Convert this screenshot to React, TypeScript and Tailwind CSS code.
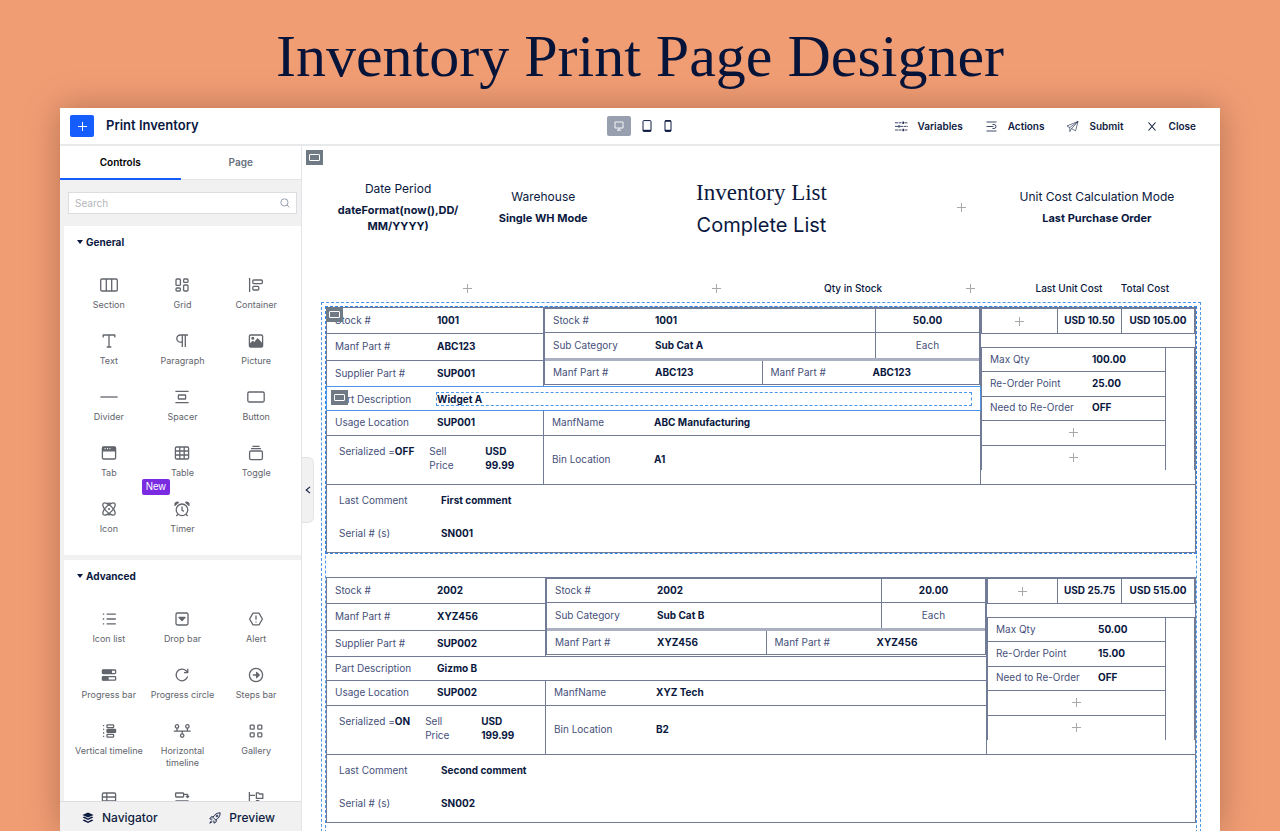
import type { ReactNode } from 'react';
import clsx from 'clsx';

interface StockRecord {
  stock: string;
  manfPart: string;
  supplierPart: string;
  description: string;
  usage: string;
  serialized: string;
  price: string;
  qty: string;
  subCategory: string;
  manfName: string;
  bin: string;
  unitCost: string;
  totalCost: string;
  maxQty: string;
  reorder: string;
  comment: string;
  serial: string;
  leftCol: string;
  rightCol: string;
}

const records: StockRecord[] = [
  {
    stock: '1001',
    manfPart: 'ABC123',
    supplierPart: 'SUP001',
    description: 'Widget A',
    usage: 'SUP001',
    serialized: 'OFF',
    price: '99.99',
    qty: '50.00',
    subCategory: 'Sub Cat A',
    manfName: 'ABC Manufacturing',
    bin: 'A1',
    unitCost: 'USD 10.50',
    totalCost: 'USD 105.00',
    maxQty: '100.00',
    reorder: '25.00',
    comment: 'First comment',
    serial: 'SN001',
    leftCol: 'w-[217px]',
    rightCol: 'w-[215px]',
  },
  {
    stock: '2002',
    manfPart: 'XYZ456',
    supplierPart: 'SUP002',
    description: 'Gizmo B',
    usage: 'SUP002',
    serialized: 'ON',
    price: '199.99',
    qty: '20.00',
    subCategory: 'Sub Cat B',
    manfName: 'XYZ Tech',
    bin: 'B2',
    unitCost: 'USD 25.75',
    totalCost: 'USD 515.00',
    maxQty: '50.00',
    reorder: '15.00',
    comment: 'Second comment',
    serial: 'SN002',
    leftCol: 'w-[219px]',
    rightCol: 'w-[209px]',
  },
];

// 18x18 outline icons of the controls palette
const icons: Record<string, ReactNode> = {
  section: <><rect x="0.7" y="3" width="16.6" height="12" rx="1.2" /><path d="M6.3 3v12M11.7 3v12" /></>,
  grid: (
    <>
      <rect x="3" y="3" width="4.4" height="6.4" rx="1" /><rect x="10.6" y="3" width="4.4" height="3.4" rx="1" />
      <rect x="3" y="12" width="4.4" height="3" rx="1" /><rect x="10.6" y="9" width="4.4" height="6" rx="1" />
    </>
  ),
  container: <><path d="M2.6 2v14" /><rect x="5.8" y="4" width="9.6" height="3.6" rx="1" /><rect x="5.8" y="10.4" width="6" height="3.6" rx="1" /></>,
  text: <path d="M3.2 5.5V3h11.6v2.5M9 3v12M6.7 15h4.6" />,
  paragraph: <path d="M15 3H7.4a3.6 3.6 0 0 0 0 7.2H9M9.3 3v12M12.3 3v12" />,
  picture: (
    <>
      <rect x="2.4" y="3" width="13.2" height="12" rx="1.2" />
      <path d="M3 14.4v-2.2l2.8-2.8 1.6 1.4L10.6 7l4.4 4.6v2.8z" fill="currentColor" />
      <circle cx="5.8" cy="6.2" r="0.9" fill="currentColor" />
    </>
  ),
  divider: <path d="M0.4 9h17.2" />,
  spacer: <><path d="M2.4 3.4h13.2M2.4 14.6h13.2" /><rect x="5.4" y="7" width="7.2" height="4" rx="0.6" /></>,
  button: <rect x="0.8" y="4" width="16.4" height="10" rx="1.4" />,
  tab: (
    <>
      <rect x="2.4" y="3" width="13.2" height="12" rx="1.2" />
      <path d="M3 3.4h12v3.4H3z" fill="currentColor" />
      <path d="M4.6 4.7h1M7 4.7h1M9.4 4.7h1" stroke="#fff" />
    </>
  ),
  table: <><rect x="2.4" y="3" width="13.2" height="12" rx="1.2" /><path d="M2.4 7h13.2M2.4 11h13.2M6.8 3v12M11.2 3v12" /></>,
  toggle: <><path d="M5.4 2.4h7.2M4 4.6h10" /><rect x="2.6" y="7" width="12.8" height="8.6" rx="1.4" /></>,
  atom: (
    <>
      <ellipse cx="9" cy="9" rx="8" ry="3.4" transform="rotate(45 9 9)" />
      <ellipse cx="9" cy="9" rx="8" ry="3.4" transform="rotate(-45 9 9)" />
      <circle cx="9" cy="9" r="1.1" fill="currentColor" stroke="none" />
      <path d="M6.6 3.8Q9 2.6 11.4 3.8M6.6 14.2Q9 15.4 11.4 14.2" />
    </>
  ),
  timer: (
    <>
      <circle cx="9" cy="9.8" r="5.8" /><path d="M9 6.4v3.8l1.8 1.2M5 14.2l-1.6 1.8M13 14.2l1.6 1.8" />
      <path d="M2 5.2a2.4 2.4 0 0 1 3.2-2.8zM16 5.2a2.4 2.4 0 0 0-3.2-2.8z" fill="currentColor" />
    </>
  ),
  iconList: <path d="M6.6 4.2h9.2M6.6 9h9.2M6.6 13.8h9.2M2.8 4.2h1.4M2.8 9h1.4M2.8 13.8h1.4" />,
  dropBar: <><rect x="3" y="3" width="12" height="12" rx="1.4" /><path d="M6 7.4h6l-3 3.2z" fill="currentColor" /></>,
  alert: <><path d="M6 3.2h6L15.4 9 12 14.8H6L2.6 9z" /><path d="M9 5.6v4.2M9 11.4v1.2" /></>,
  progressBar: (
    <>
      <rect x="2.4" y="4" width="13.2" height="3.6" rx="0.8" /><rect x="2.4" y="10.6" width="13.2" height="3.6" rx="0.8" />
      <path d="M3 4.4h8.4v2.8H3zM3 11h5v2.8H3z" fill="currentColor" />
    </>
  ),
  progressCircle: <path d="M14.6 10.4a5.8 5.8 0 1 1-1.6-5.6l1.6 1.6M14.8 2.8v3.8H11" />,
  stepsBar: <><circle cx="9" cy="9" r="6.6" /><path d="M5.8 9h6M9.6 6.4 12.2 9l-2.6 2.6z" fill="currentColor" /></>,
  vertical: (
    <>
      <path d="M3 3.6h1.2M3 7.4h1.2M3 11h1.2M3 14.4h1.2" />
      <rect x="7" y="2.8" width="6.6" height="2.8" rx="0.6" /><rect x="7" y="7.4" width="8.6" height="3" rx="0.6" fill="currentColor" />
      <rect x="7" y="12.4" width="6.6" height="2.8" rx="0.6" />
    </>
  ),
  horizontal: (
    <>
      <path d="M0.8 9.2h16.8M4 6v3M14.4 6v3M9.2 9.2v2.6" />
      <circle cx="4" cy="4.4" r="1.7" /><circle cx="14.4" cy="4.4" r="1.7" /><circle cx="9.2" cy="13.6" r="1.7" />
    </>
  ),
  gallery: (
    <>
      <rect x="3.2" y="3.2" width="4" height="4" rx="0.8" /><rect x="10.8" y="3.2" width="4" height="4" rx="0.8" />
      <rect x="3.2" y="10.8" width="4" height="4" rx="0.8" /><rect x="10.8" y="10.8" width="4" height="4" rx="0.8" />
    </>
  ),
  dataTable: <><rect x="2.4" y="3" width="13.2" height="12" rx="1.2" /><path d="M2.4 7h13.2M2.4 11h13.2M6.8 3v12" /></>,
  carousel: <><rect x="2.6" y="3" width="8" height="4" rx="0.8" /><path d="M10.6 4.4h4v3M13 6l1.6 1.6L16 6M2.4 11h13.2" /></>,
  tree: <><path d="M2.4 2v13M2.4 5.4H8M8 12.6H2.4" /><path d="M9.4 2.8h2.2l1 1.2h3.2v4.4H9.4zM9.4 10.6h2.2l1 1.2h3.2v4H9.4z" /></>,
};

const general: [string, string][] = [
  ['section', 'Section'],
  ['grid', 'Grid'],
  ['container', 'Container'],
  ['text', 'Text'],
  ['paragraph', 'Paragraph'],
  ['picture', 'Picture'],
  ['divider', 'Divider'],
  ['spacer', 'Spacer'],
  ['button', 'Button'],
  ['tab', 'Tab'],
  ['table', 'Table'],
  ['toggle', 'Toggle'],
  ['atom', 'Icon'],
  ['timer', 'Timer'],
];

const advanced: [string, string][] = [
  ['iconList', 'Icon list'],
  ['dropBar', 'Drop bar'],
  ['alert', 'Alert'],
  ['progressBar', 'Progress bar'],
  ['progressCircle', 'Progress circle'],
  ['stepsBar', 'Steps bar'],
  ['vertical', 'Vertical timeline'],
  ['horizontal', 'Horizontal timeline'],
  ['gallery', 'Gallery'],
  ['dataTable', ''],
  ['carousel', ''],
  ['tree', ''],
];

function Palette({ title, items }: { title: string; items: [string, string][] }) {
  return (
    <section className="ml-1 bg-white px-2 pt-2">
      <h2 className="flex h-4 items-center gap-[2px] pl-1 text-[10px] leading-4 font-bold text-[#0a1840]">
        <svg className="size-2" viewBox="0 0 8 8" fill="currentColor">
          <path d="M1 2h6L4 6z" />
        </svg>
        {title}
      </h2>
      <div className="grid grid-cols-3 gap-y-[21px] pt-[26px] pb-5">
        {items.map(([icon, label]) => (
          <button
            key={icon}
            type="button"
            aria-label={label || icon}
            className="relative flex flex-col items-center gap-[5px] text-[9px] leading-3 text-[#62656c]"
          >
            <svg
              className="size-[18px]"
              viewBox="0 0 18 18"
              fill="none"
              stroke="currentColor"
              strokeWidth="1.3"
              strokeLinejoin="round"
            >
              {icons[icon]}
            </svg>
            {label}
            {icon === 'timer' && (
              <span className="absolute -top-[21px] -left-1 rounded-xs bg-[#7a2be2] px-1 font-['Liberation_Sans'] text-[10px] leading-4 text-white">
                New
              </span>
            )}
          </button>
        ))}
      </div>
    </section>
  );
}

function Plus() {
  return (
    <svg className="size-[9px] shrink-0" viewBox="0 0 9 9" stroke="#a9a9a9">
      <path d="M4.5 0v9M0 4.5h9" />
    </svg>
  );
}

function Handle({ className }: { className?: string }) {
  return (
    <span className={clsx('absolute flex h-[15px] w-[17px] items-center justify-center bg-[#6f7a84]', className)}>
      <span className="h-[7px] w-[11px] rounded-[1px] border border-white" />
    </span>
  );
}

function Field({ label, value, className }: { label: string; value: string; className?: string }) {
  return (
    <div className={clsx('flex items-center pb-[2px] pl-2', className)}>
      <span className="w-[102px] shrink-0 text-[#46507a]">{label}</span>
      <span className="font-bold">{value}</span>
    </div>
  );
}

const line = 'border-[#727b96]';

function RecordTable({ record, selected }: { record: StockRecord; selected: boolean }) {
  return (
    <div className={clsx('relative', selected && 'outline outline-1 outline-dashed outline-[#2f86e8]')}>
      <table
        className={clsx(
          'w-full table-fixed border-separate border-spacing-0 border-t border-l text-[10px] leading-[14px] text-[#0a1840] [&_td]:border-r [&_td]:border-b [&_td]:border-[#727b96] [&_td]:p-0',
          line,
        )}
      >
        <colgroup>
          <col className={record.leftCol} />
          <col />
          <col className={record.rightCol} />
        </colgroup>
        <tbody>
          <tr className="h-[26px]">
            <td><Field label="Stock #" value={record.stock} /></td>
            <td rowSpan={3} className="align-top">
              <div className={clsx('border', line)}>
                <div className="flex">
                  <div className="flex-1">
                    <Field label="Stock #" value={record.stock} className={clsx('h-6 border-b', line)} />
                    <Field label="Sub Category" value={record.subCategory} className="h-[25px]" />
                  </div>
                  <div className={clsx('w-[104px] border-l text-center', line)}>
                    <div className={clsx('flex h-6 items-center justify-center border-b pb-[2px] font-bold', line)}>{record.qty}</div>
                    <div className="flex h-[25px] items-center justify-center pb-[2px] text-[#46507a]">Each</div>
                  </div>
                </div>
                <div className="flex h-[26px] border-t-3 border-[#aab0c2]">
                  <Field label="Manf Part #" value={record.manfPart} className="flex-1" />
                  <Field label="Manf Part #" value={record.manfPart} className={clsx('flex-1 border-l', line)} />
                </div>
              </div>
            </td>
            <td rowSpan={6} className="align-top">
              <div className={clsx('flex h-[26px] border', line)}>
                <div className="flex flex-1 items-center justify-center"><Plus /></div>
                <div className={clsx('flex w-16 items-center justify-center border-l pb-[2px] font-bold', line)}>{record.unitCost}</div>
                <div className={clsx('flex w-[73px] items-center justify-center border-l pb-[2px] font-bold', line)}>{record.totalCost}</div>
              </div>
              <div className={clsx('mt-[13px] flex border-x border-t', line)}>
                <div className="grid h-[122px] flex-1 grid-rows-5 divide-y divide-[#727b96]">
                  <Field label="Max Qty" value={record.maxQty} />
                  <Field label="Re-Order Point" value={record.reorder} />
                  <Field label="Need to Re-Order" value="OFF" />
                  <div className="flex items-center justify-center"><Plus /></div>
                  <div className="flex items-center justify-center"><Plus /></div>
                </div>
                <div className={clsx('w-[29px] border-l', line)} />
              </div>
            </td>
          </tr>
          <tr className="h-[27px]">
            <td><Field label="Manf Part #" value={record.manfPart} /></td>
          </tr>
          <tr className="h-[26px]">
            <td><Field label="Supplier Part #" value={record.supplierPart} /></td>
          </tr>
          <tr className="h-6">
            <td colSpan={2}>
              {selected ? (
                <div className="relative h-[23px] outline outline-1 outline-[#4a97ea]">
                  <Handle className="top-[3px] left-1" />
                  <div className="flex h-full items-center px-2">
                    <span className="w-[101px] shrink-0 text-[#46507a]">Part Description</span>
                    <span className="flex-1 border border-dashed border-[#4a97ea] leading-3 font-bold">{record.description}</span>
                  </div>
                </div>
              ) : (
                <Field label="Part Description" value={record.description} />
              )}
            </td>
          </tr>
          <tr className="h-[25px]">
            <td><Field label="Usage Location" value={record.usage} /></td>
            <td><Field label="ManfName" value={record.manfName} /></td>
          </tr>
          <tr className="h-[49px]">
            <td className="align-top">
              <div className="flex pt-2 pl-3 text-[#46507a]">
                <span>
                  Serialized =<b className="text-[#0a1840]">{record.serialized}</b>
                </span>
                <span className="ml-[15px] w-14">Sell<br />Price</span>
                <b className="text-[#0a1840]">USD<br />{record.price}</b>
              </div>
            </td>
            <td><Field label="Bin Location" value={record.bin} /></td>
          </tr>
          <tr className="h-[68px]">
            <td colSpan={3}>
              <div className="flex flex-col gap-[17px] pb-[2px] pl-1">
                <Field label="Last Comment" value={record.comment} />
                <Field label="Serial # (s)" value={record.serial} />
              </div>
            </td>
          </tr>
        </tbody>
      </table>
      {selected && <Handle className="top-0 left-0" />}
    </div>
  );
}

function TopAction({ label, children }: { label: string; children: ReactNode }) {
  return (
    <button type="button" className="flex items-center gap-[10px] text-[10px] font-semibold text-[#0f1c42]">
      <svg className="size-[13px]" viewBox="0 0 13 13" fill="none" stroke="currentColor" strokeWidth="0.8">
        {children}
      </svg>
      {label}
    </button>
  );
}

function TopBar() {
  return (
    <header className="grid h-[38px] shrink-0 grid-cols-[1fr_auto_1fr] items-center border-b-2 border-[#e8e9eb] px-[10px]">
      <div className="flex items-center gap-3">
        <button type="button" aria-label="Add" className="flex h-[22px] w-6 items-center justify-center rounded-xs bg-[#155dfc]">
          <svg className="size-[9px]" viewBox="0 0 9 9" stroke="#fff">
            <path d="M4.5 0v9M0 4.5h9" />
          </svg>
        </button>
        <span className="text-[13px] font-semibold text-[#0a1840]">Print Inventory</span>
      </div>
      <div className="flex items-center gap-[11px] text-[#0f1c42]">
        <button type="button" aria-label="Desktop" className="flex h-5 w-6 items-center justify-center rounded-xs bg-[#98a0b0] text-white">
          <svg className="size-[10px]" viewBox="0 0 10 10" fill="none" stroke="currentColor" strokeWidth="0.9">
            <path d="M1 1h8v6H1zM5 7v2M3 9.2h4" />
          </svg>
        </button>
        <button type="button" aria-label="Tablet">
          <svg className="h-3 w-[10px]" viewBox="0 0 10 12" fill="none" stroke="currentColor">
            <rect x="1" y="0.6" width="8" height="10.8" rx="0.8" /><path d="M1 10.6h8" strokeWidth="1.6" />
          </svg>
        </button>
        <button type="button" aria-label="Phone">
          <svg className="h-3 w-[10px]" viewBox="0 0 10 12" fill="none" stroke="currentColor">
            <rect x="2" y="0.6" width="6" height="10.8" rx="0.8" /><path d="M2 1h6M2 10.6h6" strokeWidth="1.6" />
          </svg>
        </button>
      </div>
      <nav className="flex justify-end gap-[22px] pr-[14px]">
        <TopAction label="Variables">
          <path d="M0 2.8h7M9.4 2.8H13M0 6.4h3M5 6.4h8M0 10h7M9.4 10H13" strokeDasharray="3 0.6" />
          <path d="M8.2 1.6v2.4M4 5.2v2.4M8.2 8.8v2.4" strokeWidth="1.4" />
        </TopAction>
        <TopAction label="Actions">
          <path d="M1.5 2h10M1.5 11h10M1.5 6.5h7" /><path d="M7.5 4.5h1.5a2 2 0 0 1 0 4H7.5" />
        </TopAction>
        <TopAction label="Submit">
          <path d="M12 1.4 1 6l2.8 1.6L12 1.4 9.6 10.8 5.6 8.6M12 1.4 5.6 8.6M3.8 7.6v4l1.8-3" strokeWidth="0.6" />
        </TopAction>
        <TopAction label="Close">
          <path d="m2.5 2.5 7 8M9.5 2.5l-7 8" strokeWidth="1.1" />
        </TopAction>
      </nav>
    </header>
  );
}

function Sidebar() {
  return (
    <aside className="relative flex w-[242px] shrink-0 flex-col border-r border-[#e2e4e7] bg-[#f1f1f1]">
      <div className="grid h-[34px] shrink-0 grid-cols-2 bg-white text-[10px] font-semibold">
        <button type="button" className="border-b-2 border-[#155dfc] text-black">Controls</button>
        <button type="button" className="border-b border-[#e2e4e7] text-[#66707c]">Page</button>
      </div>
      <label className="mx-1 mt-3 mb-3 ml-2 flex h-[22px] shrink-0 items-center border border-[#dcdde0] bg-white px-[6px]">
        <input
          type="text"
          placeholder="Search"
          aria-label="Search"
          className="w-full min-w-0 text-[10px] outline-none placeholder:text-[#b4b6bb]"
        />
        <svg className="size-[10px] shrink-0" viewBox="0 0 10 10" fill="none" stroke="#98a0b0">
          <circle cx="4.4" cy="4.4" r="3.6" /><path d="m7 7 2.4 2.4" />
        </svg>
      </label>
      <div className="flex min-h-0 flex-1 flex-col gap-[5px] overflow-hidden">
        <Palette title="General" items={general} />
        <Palette title="Advanced" items={advanced} />
      </div>
      <footer className="flex h-[30px] shrink-0 items-center border-t border-[#dcdde0] pt-[2px] text-xs font-medium text-[#0f1c42]">
        <button type="button" className="flex items-center gap-2 pl-[22px]">
          <svg className="size-3" viewBox="0 0 12 12" fill="currentColor">
            <path d="M6 .4 11.6 3 6 5.6.4 3zM.6 5.4l1.6-.8L6 6.4l3.8-1.8 1.6.8L6 8zM.6 8.4l1.6-.8L6 9.4l3.8-1.8 1.6.8L6 11z" />
          </svg>
          Navigator
        </button>
        <button type="button" className="ml-auto flex items-center gap-2 pr-[26px]">
          <svg className="size-3" viewBox="0 0 12 12" fill="none" stroke="currentColor" strokeWidth="0.9">
            <path d="M11.2.8C8 .8 5.6 2.4 4 5.4l2.6 2.6c3-1.6 4.6-4 4.6-7.2zM4.4 4.8H2.2L.8 7l2.6.2M7.2 7.6v2.2L5 11.2l-.2-2.6M2.4 8.6.8 11.2l2.6-1.6" />
            <circle cx="8" cy="4" r="0.9" />
          </svg>
          Preview
        </button>
      </footer>
      <button
        type="button"
        aria-label="Collapse"
        className="absolute top-[311px] -right-[13px] flex h-[66px] w-3 items-center justify-center rounded-r-md border border-l-0 border-[#e2e4e7] bg-[#f1f1f1]"
      >
        <svg className="size-2" viewBox="0 0 8 8" fill="none" stroke="#0f1c42" strokeWidth="1.1">
          <path d="M6 .8 2.2 4 6 7.2" />
        </svg>
      </button>
    </aside>
  );
}

function Canvas() {
  return (
    <main className="relative min-w-0 flex-1 overflow-hidden px-[19px] text-[#0a1840]">
      <Handle className="top-1 left-1" />
      <div className="grid h-[122px] grid-cols-[144fr_146fr_290fr_110fr_160fr] items-center pr-6 pl-[5px] text-center text-xs leading-4">
        <div>
          <p>Date Period</p>
          <p className="mt-[5px] text-[11px] leading-4 font-bold">dateFormat(now(),DD/<wbr />MM/YYYY)</p>
        </div>
        <div>
          <p>Warehouse</p>
          <p className="mt-[5px] text-[11px] leading-4 font-bold">Single WH Mode</p>
        </div>
        <div className="pt-1">
          <h2 className="font-['Liberation_Serif'] text-[23px] leading-8">Inventory List</h2>
          <p className="text-xl leading-8">Complete List</p>
        </div>
        <div className="flex justify-center"><Plus /></div>
        <div className="whitespace-nowrap">
          <p>Unit Cost Calculation Mode</p>
          <p className="mt-[5px] text-[11px] leading-4 font-bold">Last Purchase Order</p>
        </div>
      </div>
      <div className="mt-[9px] mb-[3px] grid h-[22px] grid-cols-[282fr_216fr_83fr_126fr_72fr_80fr_11fr] items-center justify-items-center px-[5px] text-[10px] font-medium whitespace-nowrap">
        <Plus />
        <Plus />
        <span className="justify-self-start">Qty in Stock</span>
        <Plus />
        <span>Last Unit Cost</span>
        <span>Total Cost</span>
      </div>
      <div className="border border-dashed border-[#4a97ea] p-[3px]">
        <div className="flex flex-col gap-6 border border-dashed border-[#4a97ea] pb-6">
          {records.map((record, i) => (
            <RecordTable key={record.stock} record={record} selected={i === 0} />
          ))}
        </div>
      </div>
    </main>
  );
}

export default function App() {
  return (
    <div className="flex h-screen flex-col overflow-hidden bg-[#f19d74] font-['Inter',sans-serif]">
      <h1 className="flex h-[108px] shrink-0 items-center justify-center pt-1 font-['Liberation_Serif',serif] text-[60px] text-[#06143a]">
        Inventory Print Page Designer
      </h1>
      <div className="mx-[60px] flex min-h-0 flex-1 flex-col bg-white shadow-[0_0_32px_rgba(70,40,20,0.35)]">
        <TopBar />
        <div className="flex min-h-0 flex-1">
          <Sidebar />
          <Canvas />
        </div>
      </div>
    </div>
  );
}
